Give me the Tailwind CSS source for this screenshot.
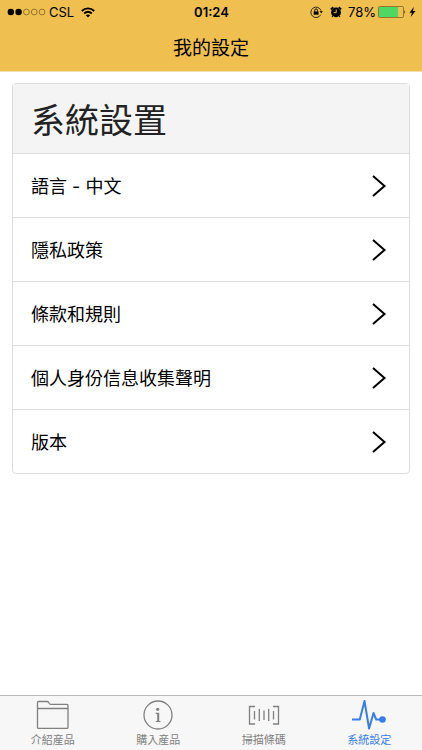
<!DOCTYPE html>
<html lang="zh-Hant">
<head>
<meta charset="utf-8">
<meta name="viewport" content="width=device-width, initial-scale=1">
<title>我的設定</title>
<script src="https://cdn.jsdelivr.net/npm/@tailwindcss/browser@4"></script>
</head>
<body class="flex min-h-screen flex-col bg-white font-['Inter','Noto_Sans_CJK_TC',sans-serif] text-black">
  <header class="border-b border-[#f3dfae] bg-[#efbf50]">
    <div class="grid h-6 grid-cols-[1fr_auto_1fr] items-center pl-[7px] pr-1.5 text-[13px]/[24px]">
      <div class="flex items-center">
        <svg class="h-2 w-[39px]" viewBox="0 0 39 8" aria-hidden="true">
          <circle cx="3.8" cy="4" r="3.2"/><circle cx="11.6" cy="4" r="3.2"/>
          <g fill="none" stroke="#5b4515" stroke-width=".6"><circle cx="19.4" cy="4" r="2.9"/><circle cx="27.2" cy="4" r="2.9"/><circle cx="35" cy="4" r="2.9"/></g>
        </svg>
        <span class="ml-[3px]">CSL</span>
        <svg class="ml-[7px] h-[11px] w-[14px]" viewBox="0 0 14 11" fill="none" stroke="#000" stroke-width="1.8" aria-hidden="true">
          <path d="M.8 4C4.400 .4 9.600 .4 13.200 4"/><path d="M3.200 6.500c2.300-2.200 5.300-2.200 7.600 0"/><path d="M4.900 8.200c1.300-1.100 2.900-1.100 4.200 0L7 10.400z" fill="#000" stroke="none"/>
        </svg>
      </div>
      <time class="font-semibold">01:24</time>
      <div class="flex items-center justify-end">
        <svg class="h-3 w-[13px]" viewBox="0 0 13 12" fill="none" stroke="#000" aria-hidden="true">
          <path d="M10.700 8.700A5.200 5.200 0 1 1 11 4.700" stroke-width=".8"/><path d="M9.500 5.200h3.400l-1.700 2.100z" fill="#000" stroke="none"/><path d="M3.700 5.400h4.800v3.300H3.700z" fill="#000" stroke="none"/><path d="M4.700 5.500V4.300a1.400 1.400 0 0 1 2.800 0v1.200" stroke-width=".9"/>
        </svg>
        <svg class="ml-[7px] h-3 w-3" viewBox="0 0 12 12" aria-hidden="true">
          <circle cx="6" cy="6.400" r="4.900"/><path d="M.8 3.400 3.200 1.200M11.200 3.400 8.800 1.200" stroke="#000" stroke-width="1.700"/><path d="M2.800 9.800l-.8 1.300M9.200 9.800l.8 1.300" stroke="#000" stroke-width="1"/><path d="M6.200 3.500v3.200H3.600" stroke="#efbf50" stroke-width="1" fill="none"/>
        </svg>
        <span class="ml-1.5">78%</span>
        <svg class="ml-0.5 h-3 w-[28px]" viewBox="0 0 28 12" aria-hidden="true">
          <rect x=".5" y=".5" width="25" height="11" rx="1.200" fill="none" stroke="#806528" stroke-width=".8"/><rect x="1" y="1" width="19" height="10" fill="#4cd863"/><path d="M26.500 4q1.300 2 0 4z"/>
        </svg>
        <svg class="ml-[3px] h-3 w-[7px]" viewBox="0 0 7 12" aria-hidden="true"><path d="M4.800 1 .5 6.700h2.400L1.700 11 6.500 5H4z"/></svg>
      </div>
    </div>
    <h1 class="pt-[5px] pb-0.5 text-center text-[19px]/[40px]">我的設定</h1>
  </header>

  <main class="flex-1 px-3 py-[11px]">
    <section class="rounded-sm border border-[#dddddd]">
      <h2 class="bg-[#f4f4f4] px-[18px] pt-1 text-[34px]/[65px] font-normal text-[#222222]">系統設置</h2>
      <ul class="text-[18px]">
        <li><a href="#language" class="flex h-16 items-center justify-between border-t border-[#dddddd] pl-[18px] pr-[22px]"><span class="pt-0.5">語言 - 中文</span><svg class="h-6 w-4" viewBox="0 0 16 24" fill="none" stroke="#000" stroke-width="2" aria-hidden="true"><path d="M2 2 13.500 12 2 22"/></svg></a></li>
        <li><a href="#privacy" class="flex h-16 items-center justify-between border-t border-[#dddddd] pl-[18px] pr-[22px]"><span class="pt-0.5">隱私政策</span><svg class="h-6 w-4" viewBox="0 0 16 24" fill="none" stroke="#000" stroke-width="2" aria-hidden="true"><path d="M2 2 13.500 12 2 22"/></svg></a></li>
        <li><a href="#terms" class="flex h-16 items-center justify-between border-t border-[#dddddd] pl-[18px] pr-[22px]"><span class="pt-0.5">條款和規則</span><svg class="h-6 w-4" viewBox="0 0 16 24" fill="none" stroke="#000" stroke-width="2" aria-hidden="true"><path d="M2 2 13.500 12 2 22"/></svg></a></li>
        <li><a href="#collection" class="flex h-16 items-center justify-between border-t border-[#dddddd] pl-[18px] pr-[22px]"><span class="pt-0.5">個人身份信息收集聲明</span><svg class="h-6 w-4" viewBox="0 0 16 24" fill="none" stroke="#000" stroke-width="2" aria-hidden="true"><path d="M2 2 13.500 12 2 22"/></svg></a></li>
        <li><a href="#version" class="flex h-16 items-center justify-between border-t border-[#dddddd] pl-[18px] pr-[22px]"><span class="pt-0.5">版本</span><svg class="h-6 w-4" viewBox="0 0 16 24" fill="none" stroke="#000" stroke-width="2" aria-hidden="true"><path d="M2 2 13.500 12 2 22"/></svg></a></li>
      </ul>
    </section>
  </main>

  <nav class="grid grid-cols-4 border-t border-[#b9b9b9] bg-[#f7f7f7] pt-1 text-[11px]/[16px] text-[#808080]">
    <a href="#intro" class="flex flex-col items-center pb-0.5">
      <svg class="h-8 w-9" viewBox="0 0 36 32" fill="none" stroke="currentColor" stroke-width="1.300" aria-hidden="true"><path d="M2.500 27.500v-25q0-1 1-1h8.500q1 0 1.600.9l.8 1.200q.6.800 1.600.8h16q1 0 1 1v22q0 1-1 1h-28.500q-1 0-1-.9zM2.500 8.500H33"/></svg>
      <span>介紹産品</span>
    </a>
    <a href="#buy" class="flex flex-col items-center pb-0.5">
      <svg class="h-8 w-9" viewBox="0 0 36 32" aria-hidden="true"><circle cx="18" cy="15" r="14" fill="none" stroke="currentColor" stroke-width="1.300"/><circle cx="17.700" cy="9.300" r="1.600" fill="currentColor"/><path d="M15.600 12.700h3.600v8l1.500.5v.9h-5v-.9l1.500-.5v-6.500l-1.600-.5z" fill="currentColor"/></svg>
      <span>購入産品</span>
    </a>
    <a href="#scan" class="flex flex-col items-center pb-0.5">
      <svg class="h-8 w-9" viewBox="0 0 36 32" fill="none" stroke="currentColor" stroke-width="1.300" aria-hidden="true"><path d="M9 6.500H3.500v17.500H9M27 6.500h5.500v17.500H27M8.500 11v8.500M13.300 9v12M18 10.500v9.500M22.700 9v12M27.500 11v8.500"/></svg>
      <span>掃描條碼</span>
    </a>
    <a href="#settings" aria-current="page" class="flex flex-col items-center pb-0.5 text-[#3a7de8]">
      <svg class="h-8 w-9" viewBox="0 0 36 32" fill="none" stroke="currentColor" stroke-width="2" stroke-linejoin="round" aria-hidden="true"><path d="M1 19.500h7.800L13.500 1l4.600 27.500L22.500 13l2.700 6.500H30"/><circle cx="31.500" cy="19.500" r="3.300" fill="currentColor" stroke="none"/></svg>
      <span>系統設定</span>
    </a>
  </nav>
</body>
</html>
